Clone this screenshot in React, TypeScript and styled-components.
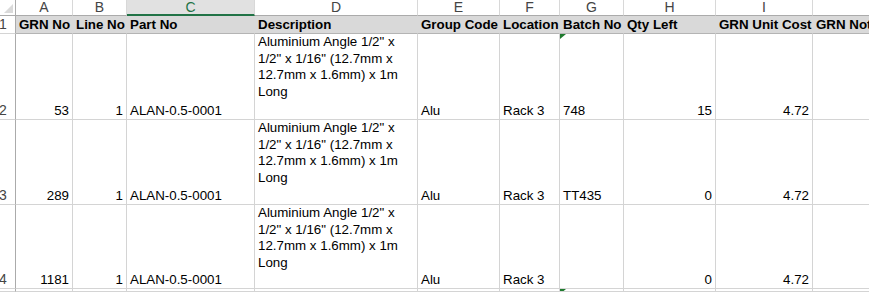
import React from "react";
import styled, { createGlobalStyle } from "styled-components";

const GlobalStyle = createGlobalStyle`
  html, body {
    margin: 0;
    padding: 0;
    background: #ffffff;
    overflow: hidden;
  }
`;

const Sheet = styled.div`
  display: grid;
  grid-template-columns: 16px 57px 54px 128px 163px 82px 60px 64px 92px 97px 120px;
  grid-template-rows: 16px 18px 86px 85px 84px 3px;
  width: 869px;
  overflow: hidden;
  font-family: "Liberation Sans", Arial, sans-serif;
  font-size: 13.33px;
  color: #000;
`;

const Corner = styled.div`
  position: relative;
  box-sizing: border-box;
  background: #ffffff;
  border-right: 1px solid #ababab;
  border-bottom: 1px solid #ababab;

  &::after {
    content: "";
    position: absolute;
    right: 2px;
    bottom: 2px;
    border-style: solid;
    border-width: 0 0 9px 9px;
    border-color: transparent transparent #dadada transparent;
  }
`;

const ColHead = styled.div<{ $selected?: boolean }>`
  box-sizing: border-box;
  display: flex;
  align-items: center;
  justify-content: center;
  background: ${(p) => (p.$selected ? "#e1e1e1" : "#ffffff")};
  color: ${(p) => (p.$selected ? "#217346" : "#444444")};
  font-size: 14px;
  line-height: 15px;
  border-right: 1px solid #d8d8d8;
  border-bottom: ${(p) => (p.$selected ? "2px solid #217346" : "1px solid #ababab")};
  padding-top: ${(p) => (p.$selected ? "1px" : "0")};
`;

const RowHead = styled.div`
  box-sizing: border-box;
  display: flex;
  align-items: flex-end;
  overflow: hidden;
  background: #ffffff;
  color: #444444;
  font-size: 14px;
  line-height: 17px;
  text-indent: -1px;
  border-right: 1px solid #ababab;
  border-bottom: 1px solid #d4d4d4;
`;

const HeadCell = styled.div`
  box-sizing: border-box;
  display: flex;
  align-items: flex-end;
  padding: 0 3px;
  overflow: hidden;
  white-space: nowrap;
  background: #d9d9d9;
  font-weight: bold;
  line-height: 17px;
  border-right: 1px solid #d9d9d9;
  border-bottom: 1px solid #b4b4b4;
`;

const Cell = styled.div<{ $right?: boolean; $top?: boolean }>`
  position: relative;
  box-sizing: border-box;
  display: flex;
  align-items: ${(p) => (p.$top ? "flex-start" : "flex-end")};
  justify-content: ${(p) => (p.$right ? "flex-end" : "flex-start")};
  padding: 0 3px;
  overflow: hidden;
  white-space: nowrap;
  line-height: 17px;
  border-right: 1px solid #d4d4d4;
  border-bottom: 1px solid #d4d4d4;
`;

const Wrapped = styled.span`
  white-space: normal;
  line-height: 16.7px;
`;

const ErrorFlag = styled.span`
  position: absolute;
  top: 0;
  left: 0;
  width: 0;
  height: 0;
  border-style: solid;
  border-width: 5px 6px 0 0;
  border-color: #1f7a2e transparent transparent transparent;
`;

const letters = ["A", "B", "C", "D", "E", "F", "G", "H", "I", ""];
const headers = [
  "GRN No",
  "Line No",
  "Part No",
  "Description",
  "Group Code",
  "Location",
  "Batch No",
  "Qty Left",
  "GRN Unit Cost",
  "GRN Notes",
];

const desc = 'Aluminium Angle 1/2" x 1/2" x 1/16" (12.7mm x 12.7mm x 1.6mm) x 1m Long';

const rows = [
  { n: 2, grn: "53", batch: "748", qty: "15", flag: true },
  { n: 3, grn: "289", batch: "TT435", qty: "0", flag: false },
  { n: 4, grn: "1181", batch: "", qty: "0", flag: false },
];

export default function App() {
  return (
    <>
      <GlobalStyle />
      <Sheet>
        <Corner />
        {letters.map((l) => (
          <ColHead key={"c" + l} $selected={l === "C"}>
            {l}
          </ColHead>
        ))}

        <RowHead>1</RowHead>
        {headers.map((h) => (
          <HeadCell key={h}>{h}</HeadCell>
        ))}

        {rows.map((r) => (
          <React.Fragment key={r.n}>
            <RowHead>{r.n}</RowHead>
            <Cell $right>{r.grn}</Cell>
            <Cell $right>1</Cell>
            <Cell>ALAN-0.5-0001</Cell>
            <Cell $top>
              <Wrapped>{desc}</Wrapped>
            </Cell>
            <Cell>Alu</Cell>
            <Cell>Rack 3</Cell>
            <Cell>
              {r.flag && <ErrorFlag />}
              {r.batch}
            </Cell>
            <Cell $right>{r.qty}</Cell>
            <Cell $right>4.72</Cell>
            <Cell />
          </React.Fragment>
        ))}

        <RowHead />
        <Cell />
        <Cell />
        <Cell />
        <Cell />
        <Cell />
        <Cell />
        <Cell>
          <ErrorFlag />
        </Cell>
        <Cell />
        <Cell />
        <Cell />
      </Sheet>
    </>
  );
}
